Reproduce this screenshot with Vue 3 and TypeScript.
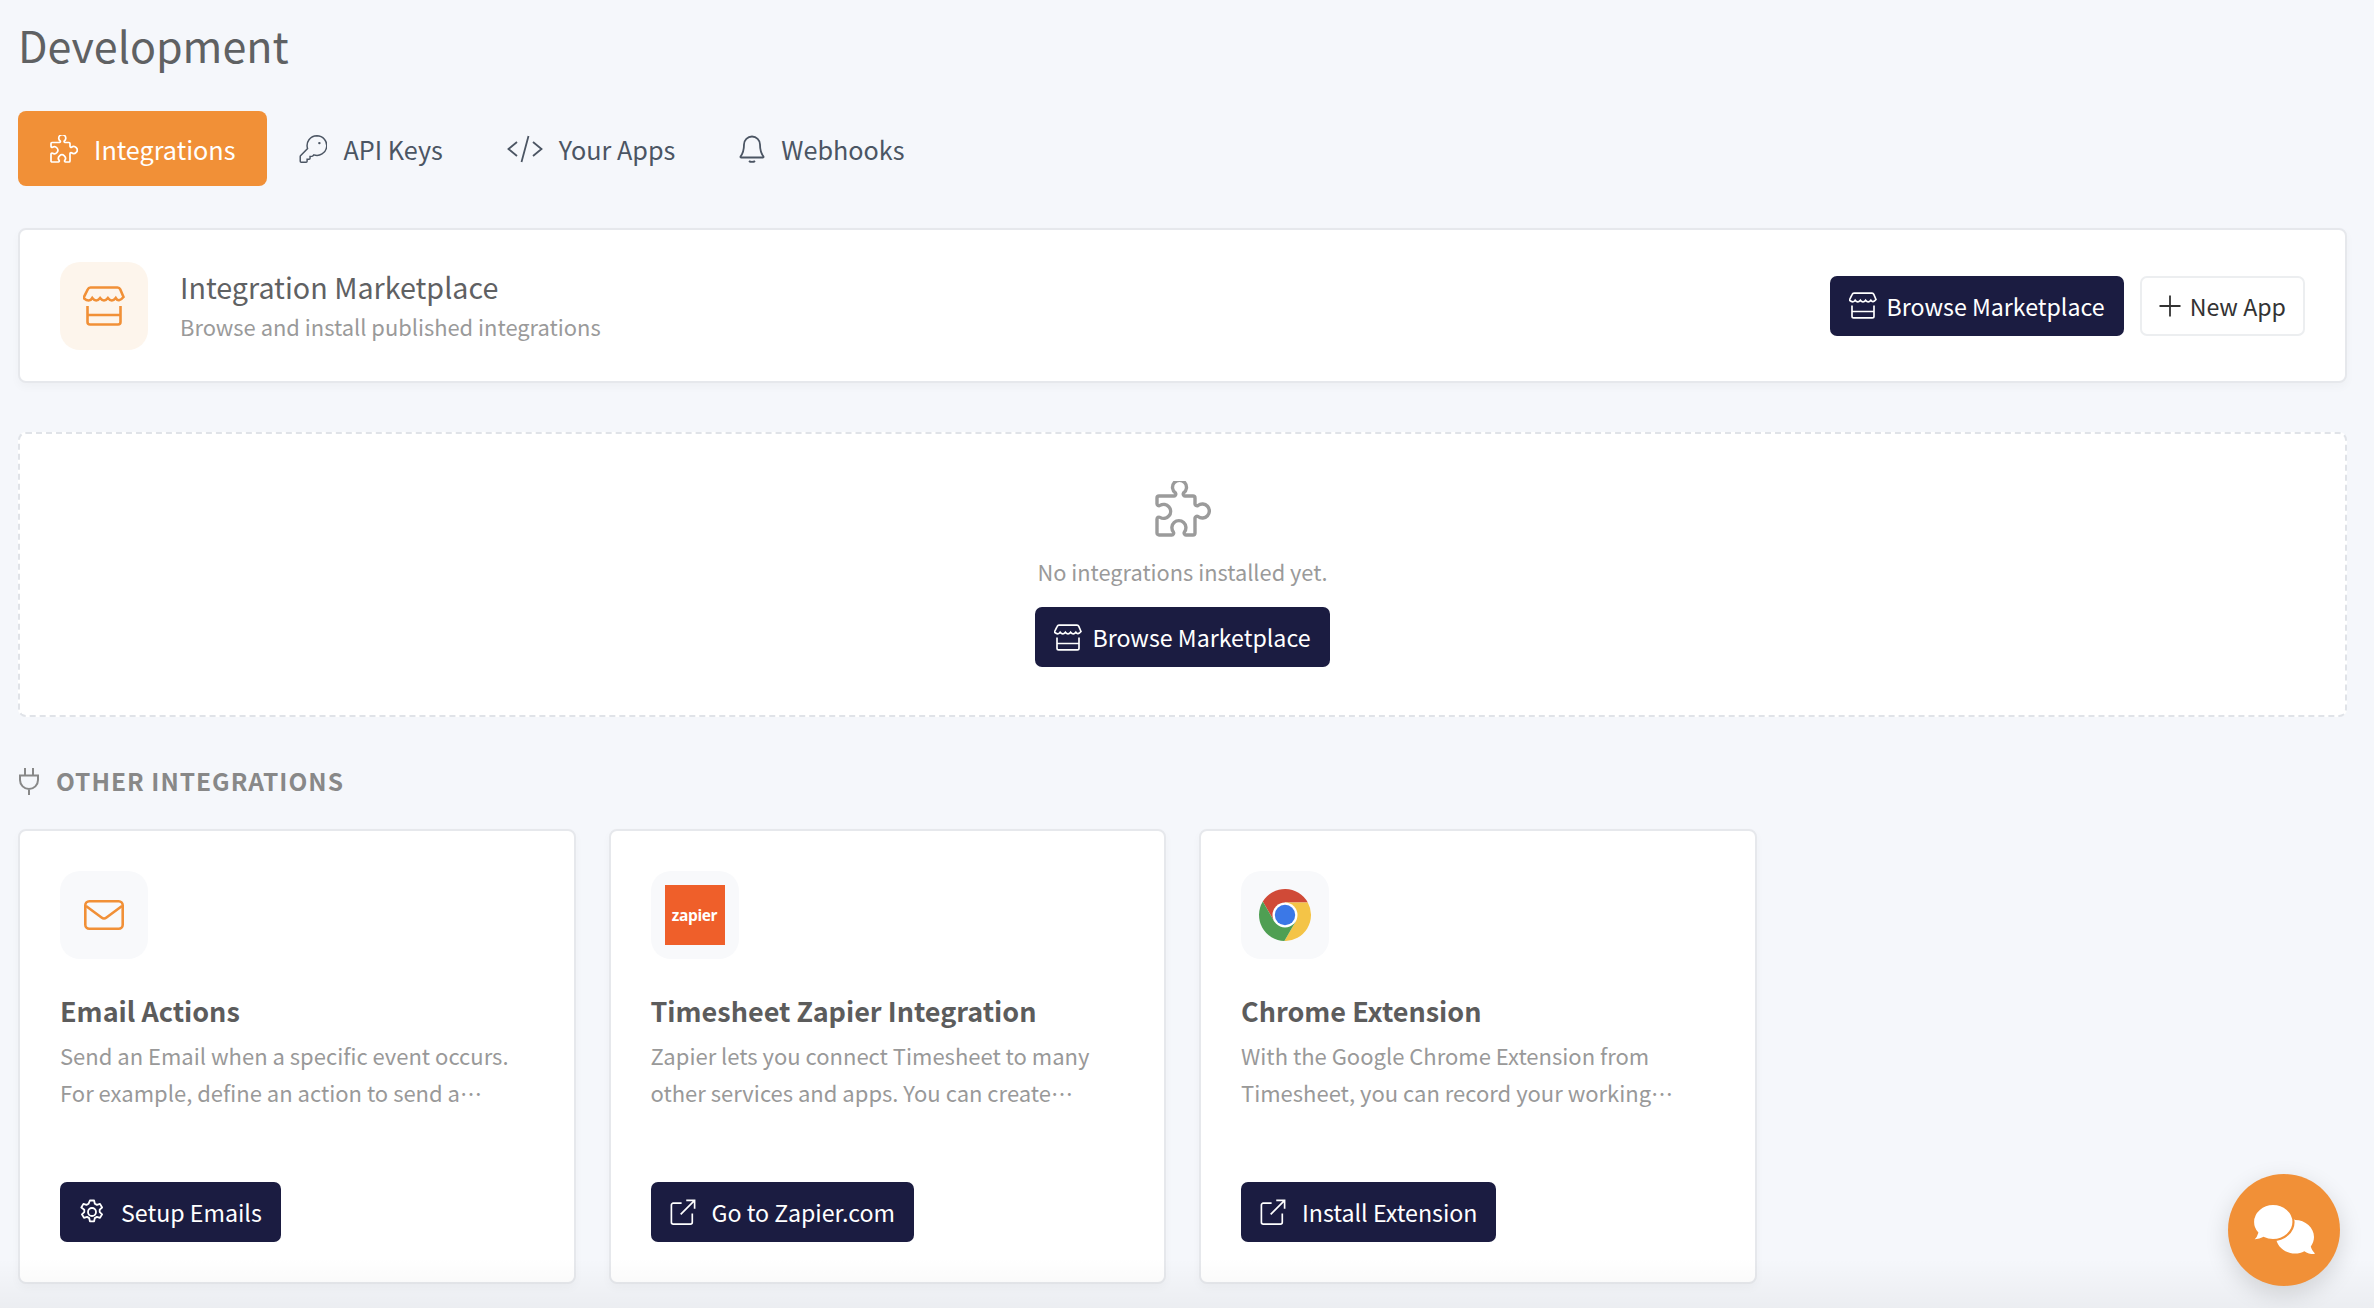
<script setup lang="ts">
interface Tab {
  label: string;
  icon: string;
  active?: boolean;
}

interface OtherCard {
  title: string;
  text: string;
  logo: "mail" | "zapier" | "chrome";
  action: string;
  icon: string;
}

const tabs: Tab[] = [
  { label: "Integrations", icon: "puzzle", active: true },
  { label: "API Keys", icon: "key" },
  { label: "Your Apps", icon: "code" },
  { label: "Webhooks", icon: "bell" },
];

const cards: OtherCard[] = [
  {
    title: "Email Actions",
    text: "Send an Email when a specific event occurs. For example, define an action to send a worker an email when they clock in or out of a project.",
    logo: "mail",
    action: "Setup Emails",
    icon: "gear",
  },
  {
    title: "Timesheet Zapier Integration",
    text: "Zapier lets you connect Timesheet to many other services and apps. You can create automated workflows between them without any code.",
    logo: "zapier",
    action: "Go to Zapier.com",
    icon: "external",
  },
  {
    title: "Chrome Extension",
    text: "With the Google Chrome Extension from Timesheet, you can record your working hours directly from your browser window.",
    logo: "chrome",
    action: "Install Extension",
    icon: "external",
  },
];
</script>

<template>
  <div class="page">
    <!-- shared icons -->
    <svg class="defs" aria-hidden="true">
      <symbol id="ico-puzzle" viewBox="0 0 56 56">
        <path d="M4 15H19a2 2 0 0 0 1.500-3a7 7 0 1 1 8 0a2 2 0 0 0 1.500 3H38a2 2 0 0 1 2 2V23a2 2 0 0 0 3 1.500a7 7 0 1 1 0 11a2 2 0 0 0-3 1.500V52a2 2 0 0 1-2 2H31a2 2 0 0 1-1.600-3a7 7 0 1 0-11 0a2 2 0 0 1-1.600 3H4a2 2 0 0 1-2-2V38a2 2 0 0 1 3-1.600a7 7 0 1 0 0-12a2 2 0 0 1-3-1.600V17a2 2 0 0 1 2-2Z" />
      </symbol>
      <symbol id="ico-key" viewBox="18 10 220 228">
        <path d="M160 16A80 80 0 0 0 84 120.800L26.300 178.300A8 8 0 0 0 24 184v40a8 8 0 0 0 8 8H72a8 8 0 0 0 8-8V208H96a8 8 0 0 0 8-8V184h16a8 8 0 0 0 5.700-2.300l9.500-9.600A80 80 0 1 0 160 16Z" />
        <circle cx="180" cy="76" r="10" fill="currentColor" stroke="none" />
      </symbol>
      <symbol id="ico-code" viewBox="0 0 36 28">
        <path d="M10 7L1.500 14L10 21M26 7L34.500 14L26 21M21.500 1L14.500 27" />
      </symbol>
      <symbol id="ico-bell" viewBox="0 0 26 28">
        <path d="M13 1.500a8 8 0 0 1 8 8c0 7 1.500 9.500 3.500 12a.6.6 0 0 1-.5 1H2a.6.6 0 0 1-.5-1c2-2.500 3.500-5 3.500-12a8 8 0 0 1 8-8ZM10 26a3.500 2 0 0 0 6 0" />
      </symbol>
      <symbol id="ico-store" viewBox="0 0 42 40">
        <path d="M7.500 1.500H34.500a3 3 0 0 1 2.700 1.800L40.500 11q-4.900 6-7.800 1q-3.900 5-7.800 0q-3.900 5-7.800 0q-3.900 5-7.800 0q-2.900 5-8.800 0L4.800 3.300a3 3 0 0 1 2.700-1.800ZM4.500 20V36a2.500 2.500 0 0 0 2.500 2.500H35a2.500 2.500 0 0 0 2.500-2.500V20M4.500 29H37.500" />
      </symbol>
      <symbol id="ico-gear" viewBox="0 0 26 26">
        <path d="M10.900 1.500h4.200l.7 3.200 2.100 1.200 3.100-1 2.100 3.600-2.400 2.200v2.400l2.400 2.200-2.100 3.600-3.100-1-2.100 1.200-.7 3.200h-4.200l-.7-3.200-2.100-1.200-3.100 1-2.100-3.600 2.400-2.200v-2.400L2.300 8.500l2.100-3.600 3.100 1 2.100-1.200Z" stroke-linejoin="round" />
        <circle cx="13" cy="13" r="4" />
      </symbol>
      <symbol id="ico-external" viewBox="0 0 28 28">
        <path d="M12.500 4.500H3.500a2 2 0 0 0-2 2V25a2 2 0 0 0 2 2H22a2 2 0 0 0 2-2V15.500M11.500 16.500L26.500 1.500M17.500 1.500H26.500V10.500" />
      </symbol>
    </svg>

    <h1 class="page-title">Development</h1>

    <nav class="tabs">
      <a v-for="tab in tabs" :key="tab.label" class="tab" :class="{ active: tab.active }">
        <svg class="tab-icon" :class="`tab-icon-${tab.icon}`"><use :href="`#ico-${tab.icon}`" /></svg>
        <span>{{ tab.label }}</span>
      </a>
    </nav>

    <section class="market">
      <div class="market-tile">
        <svg class="market-icon"><use href="#ico-store" /></svg>
      </div>
      <div class="market-text">
        <div class="market-title">Integration Marketplace</div>
        <div class="market-sub">Browse and install published integrations</div>
      </div>
      <div class="market-actions">
        <button class="btn">
          <svg class="btn-store"><use href="#ico-store" /></svg>
          Browse Marketplace
        </button>
        <button class="btn btn-light">
          <svg class="btn-plus" viewBox="0 0 22 22"><path d="M11 0.500V21.500M0.500 11H21.500" /></svg>
          New App
        </button>
      </div>
    </section>

    <section class="empty">
      <svg class="empty-icon"><use href="#ico-puzzle" /></svg>
      <p class="empty-text">No integrations installed yet.</p>
      <button class="btn">
        <svg class="btn-store"><use href="#ico-store" /></svg>
        Browse Marketplace
      </button>
    </section>

    <h2 class="section-title">
      <svg class="plug" viewBox="0 0 22 28">
        <path d="M7 1V8M15 1V8M2 8.500H20V13a9 9 0 0 1-18 0ZM11 22V28" />
      </svg>
      OTHER INTEGRATIONS
    </h2>

    <div class="grid">
      <article v-for="card in cards" :key="card.title" class="card">
        <div class="card-tile">
          <svg v-if="card.logo === 'mail'" class="logo-mail" viewBox="0 0 40 30">
            <rect x="1.300" y="1.300" width="37.400" height="27.400" rx="4" />
            <path d="M2 6L17.500 17.500a4 4 0 0 0 5 0L38 6" />
          </svg>
          <div v-else-if="card.logo === 'zapier'" class="logo-zapier">zapier</div>
          <svg v-else class="logo-chrome" viewBox="-26 -26 52 52">
            <path fill="#d04a37" d="M22.800 -12.500A26 26 0 0 0 -22.200 -13.500L-10.800 6.300L0 -12.500Z" />
            <path fill="#f4c447" d="M22.800 -12.500A26 26 0 0 1 -0.600 26L10.800 6.300L0 -12.500Z" />
            <path fill="#4f9f53" d="M-0.600 26A26 26 0 0 1 -22.200 -13.500L-10.800 6.300L10.800 6.300Z" />
            <circle r="12.500" fill="#fff" />
            <circle r="10.200" fill="#3b78e7" />
          </svg>
        </div>
        <h3 class="card-title">{{ card.title }}</h3>
        <p class="card-text">{{ card.text }}</p>
        <button class="btn card-btn">
          <svg class="btn-icon"><use :href="`#ico-${card.icon}`" /></svg>
          {{ card.action }}
        </button>
      </article>
    </div>

    <button class="chat" aria-label="Chat">
      <svg viewBox="0 0 112 112">
        <path fill="#fff" d="M67 46c10.500 0 19 7.600 19 17 0 3.500-1.200 6.800-3.200 9.500 .6 2.500 2 4.800 3.700 6.500 .5 .5 0 1-.6 1-3.400 0-7-.8-9.500-2.800-2.700 1.500-6 2.300-9.400 2.300-10.500 0-19-7.600-19-17s8.500-17 19-17Z" />
        <path fill="#fff" stroke="#f19037" stroke-width="2.200" d="M45 30c11 0 20.500 8 20.500 18S56 66 45 66c-3.400 0-6.600-.7-9.400-2-2.700 1.700-6 2.500-9.600 2.300-.6 0-1-.6-.6-1 1.800-1.700 3.200-4 3.800-6.500-2.600-2.800-4.200-6.400-4.200-10.800 0-10 9.500-18 20-18Z" />
      </svg>
    </button>
    <div class="bottom-fade"></div>
  </div>
</template>

<style>
html,
body {
  margin: 0;
  background: #f5f7fb;
}
</style>

<style scoped>
.page {
  position: relative;
  box-sizing: border-box;
  height: 1308px;
  overflow: hidden;
  padding: 15px 27px 0 18px;
  background: #f5f7fb;
  font-family: "Noto Sans CJK JP", "Noto Sans", sans-serif;
  color: #5f6163;
}

.defs {
  position: absolute;
  width: 0;
  height: 0;
}

.page-title {
  margin: 0;
  font-size: 43px;
  line-height: 58px;
  font-weight: 400;
  color: #5f6163;
}

.tabs {
  display: flex;
  margin-top: 38px;
  height: 75px;
}

.tab {
  display: flex;
  align-items: center;
  gap: 16px;
  padding: 0 32px;
  font-size: 25.200px;
  color: #4b5563;
  border-radius: 8px;
}

.tab.active {
  background: #f19037;
  color: #fff;
}

.tab-icon {
  width: 28px;
  height: 28px;
  fill: none;
  stroke: currentColor;
  stroke-width: 3.400;
  flex-shrink: 0;
}

.tab-icon-key {
  stroke-width: 12;
}

.tab-icon-code {
  width: 36px;
  stroke-width: 1.800;
}

.tab-icon-bell {
  width: 26px;
  stroke-width: 1.800;
}

.market {
  display: flex;
  align-items: center;
  box-sizing: border-box;
  height: 155px;
  margin-top: 42px;
  padding: 0 40px;
  background: #fff;
  border: 2px solid #e6e8ec;
  border-radius: 8px;
  box-shadow: 0 4px 10px rgba(0, 0, 0, 0.03);
}

.market-tile {
  display: flex;
  align-items: center;
  justify-content: center;
  width: 88px;
  height: 88px;
  border-radius: 20px;
  background: #fdf5ec;
}

.market-icon {
  width: 42px;
  height: 40px;
  fill: none;
  stroke: #f19037;
  stroke-width: 2.600;
}

.market-text {
  margin-left: 32px;
  flex: 1;
}

.market-title {
  font-size: 28.700px;
  line-height: 40px;
  color: #5f6163;
}

.market-sub {
  margin-top: 2px;
  font-size: 21.900px;
  line-height: 36px;
  color: #9a9a9a;
}

.market-actions {
  display: flex;
  gap: 16px;
}

.btn {
  display: inline-flex;
  align-items: center;
  box-sizing: border-box;
  height: 60px;
  padding: 0 19px;
  border: none;
  border-radius: 7px;
  background: #1b1c41;
  color: #fff;
  font-family: inherit;
  font-size: 23.200px;
  white-space: nowrap;
}

.btn-light {
  padding: 0 17px;
  background: #fff;
  color: #333;
  border: 2px solid #eceef0;
}

.btn-store {
  width: 28px;
  height: 27px;
  margin-right: 10px;
  fill: none;
  stroke: currentColor;
  stroke-width: 2.500;
}

.btn-plus {
  width: 22px;
  height: 22px;
  margin-right: 9px;
  fill: none;
  stroke: currentColor;
  stroke-width: 1.800;
}

.empty {
  display: flex;
  flex-direction: column;
  align-items: center;
  box-sizing: border-box;
  height: 285px;
  margin-top: 49px;
  padding-top: 47px;
  background: #fff;
  border: 2px dashed #e0e3e8;
  border-radius: 8px;
}

.empty-icon {
  width: 56px;
  height: 56px;
  fill: none;
  stroke: #9b9b9b;
  stroke-width: 3.400;
}

.empty-text {
  margin: 18px 0 0;
  font-size: 21.800px;
  line-height: 34px;
  color: #9a9a9a;
}

.empty .btn {
  margin-top: 18px;
}

.section-title {
  display: flex;
  align-items: center;
  gap: 16px;
  margin: 46px 0 0;
  font-size: 24.500px;
  line-height: 36px;
  font-weight: 700;
  letter-spacing: 1px;
  color: #888;
}

.plug {
  width: 22px;
  height: 28px;
  fill: none;
  stroke: #888;
  stroke-width: 2;
}

.grid {
  display: grid;
  grid-template-columns: repeat(4, 1fr);
  gap: 33px;
  margin-top: 30px;
}

.card {
  display: flex;
  flex-direction: column;
  box-sizing: border-box;
  height: 455px;
  padding: 40px;
  background: #fff;
  border: 2px solid #e6e8ec;
  border-radius: 8px;
  box-shadow: 0 4px 10px rgba(0, 0, 0, 0.03);
}

.card-tile {
  display: flex;
  align-items: center;
  justify-content: center;
  width: 88px;
  height: 88px;
  border-radius: 20px;
  background: #f8f9fb;
}

.logo-mail {
  width: 40px;
  height: 30px;
  fill: none;
  stroke: #f19037;
  stroke-width: 2.600;
}

.logo-zapier {
  display: flex;
  align-items: center;
  justify-content: center;
  width: 60px;
  height: 60px;
  background: #ef5f2a;
  color: #fff;
  font-family: "Open Sans", sans-serif;
  font-size: 15.500px;
  font-weight: 700;
  letter-spacing: -0.4px;
}

.logo-chrome {
  width: 52px;
  height: 52px;
}

.card-title {
  margin: 32px 0 0;
  font-size: 27px;
  line-height: 40px;
  font-weight: 700;
  color: #5c5c5c;
}

.card-text {
  display: -webkit-box;
  -webkit-box-orient: vertical;
  -webkit-line-clamp: 2;
  overflow: hidden;
  margin: 6px 0 0;
  font-size: 22px;
  line-height: 37px;
  color: #999;
}

.card-btn {
  align-self: flex-start;
  margin-top: auto;
}

.btn-icon {
  width: 26px;
  height: 26px;
  margin-right: 16px;
  fill: none;
  stroke: currentColor;
  stroke-width: 1.800;
}

.chat {
  position: absolute;
  left: 2228px;
  top: 1174px;
  width: 112px;
  height: 112px;
  padding: 0;
  border: none;
  border-radius: 50%;
  background: #f19037;
  box-shadow: 0 8px 24px rgba(0, 0, 0, 0.14);
  z-index: 2;
}

.chat svg {
  display: block;
  width: 112px;
  height: 112px;
}

.bottom-fade {
  position: absolute;
  left: 0;
  right: 0;
  bottom: 0;
  height: 50px;
  background: linear-gradient(rgba(0, 0, 0, 0), rgba(0, 0, 0, 0.04));
  pointer-events: none;
}
</style>
